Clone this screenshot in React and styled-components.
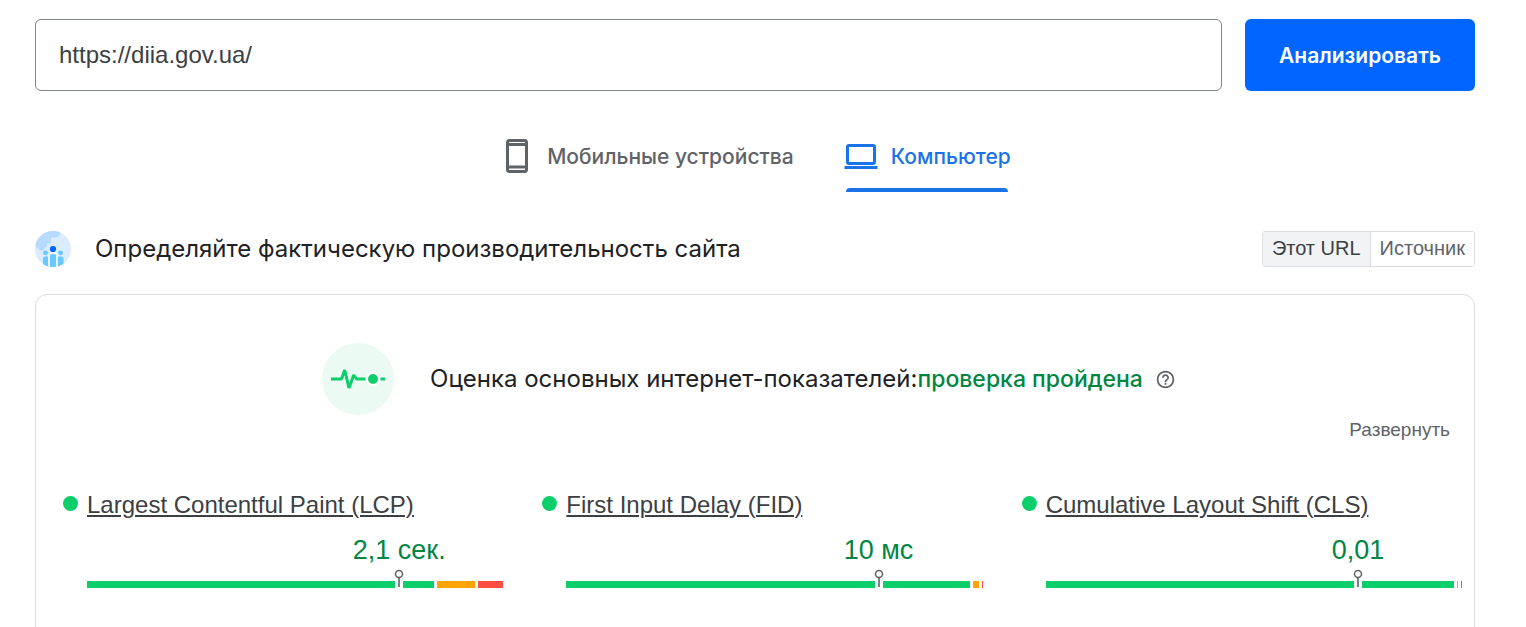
import { useState } from 'react';
import styled, { createGlobalStyle } from 'styled-components';

const GlobalStyle = createGlobalStyle`
  * {
    box-sizing: border-box;
  }
  body {
    margin: 0;
    background: #fff;
    color: #202124;
    font-family: 'Liberation Sans', Arial, sans-serif;
  }
  button {
    padding: 0;
    border: 0;
    background: none;
    font-family: inherit;
    cursor: pointer;
  }
`;

const headingFont = "Inter, 'Open Sans', sans-serif";

const Page = styled.main`
  padding: 19px 51px 0 35px;
  height: 100vh;
  overflow: hidden;
`;

const SearchForm = styled.form`
  display: flex;
  gap: 23px;
`;

const UrlInput = styled.input`
  flex: 1;
  min-width: 0;
  height: 72px;
  padding: 0 23px;
  border: 1px solid #80868b;
  border-radius: 6px;
  color: #3c4043;
  font-family: inherit;
  font-size: 24px;
`;

const AnalyzeButton = styled.button`
  height: 72px;
  width: 230px;
  border-radius: 6px;
  background: #0066ff;
  color: #fff;
  font-family: ${headingFont};
  font-size: 21px;
  font-weight: 600;
`;

const Tabs = styled.div`
  display: flex;
  justify-content: center;
  gap: 49px;
  margin-top: 29px;
`;

const Tab = styled.button`
  position: relative;
  display: flex;
  align-items: center;
  gap: 12px;
  height: 72px;
  color: ${(p) => (p.$active ? '#1a73e8' : '#5f6368')};
  font-family: ${headingFont};
  font-size: 21px;
  font-weight: 500;

  &::after {
    content: '';
    position: absolute;
    left: 3px;
    right: 3px;
    bottom: 0;
    height: 4px;
    border-radius: 4px 4px 0 0;
    background: ${(p) => (p.$active ? '#1a73e8' : 'transparent')};
  }
`;

const SectionHeader = styled.header`
  display: flex;
  align-items: center;
  gap: 24px;
  margin-top: 39px;
`;

const SectionTitle = styled.h1`
  flex: 1;
  margin: 0;
  font-family: ${headingFont};
  font-size: 24px;
  line-height: 36px;
  font-weight: 400;
`;

const Segmented = styled.div`
  display: flex;
  height: 36px;
  border: 1px solid #dadce0;
  border-radius: 3px;
`;

const Segment = styled.button`
  padding: 0 9px 2px;
  background: ${(p) => (p.$active ? '#f1f3f4' : '#fff')};
  color: ${(p) => (p.$active ? '#3c4043' : '#5f6368')};
  font-size: 20px;

  & + & {
    border-left: 1px solid #dadce0;
  }
`;

const Card = styled.section`
  margin-top: 27px;
  height: 400px;
  padding: 48px 12px 0 27px;
  border: 1px solid #dadce0;
  border-radius: 12px;
`;

const Assessment = styled.div`
  display: flex;
  align-items: center;
  justify-content: center;
  gap: 36px;
  padding-right: 15px;
`;

const AssessmentText = styled.h2`
  display: flex;
  align-items: center;
  margin: 0;
  font-family: ${headingFont};
  font-size: 24px;
  line-height: 36px;
  font-weight: 400;
`;

const Passed = styled.span`
  color: #018642;
  font-size: 23px;
  font-weight: 500;
`;

const HelpButton = styled.button`
  display: flex;
  margin: 0 12px;
`;

const ExpandRow = styled.div`
  display: flex;
  justify-content: flex-end;
  padding-right: 12px;
`;

const ExpandButton = styled.button`
  height: 30px;
  color: #5f6368;
  font-size: 19px;
`;

const Metrics = styled.div`
  display: grid;
  grid-template-columns: repeat(3, 1fr);
  gap: 39px;
  margin-top: 45px;
`;

const Metric = styled.article`
  display: grid;
  grid-template-columns: 15px 1fr;
  column-gap: 9px;
`;

const Dot = styled.span`
  width: 15px;
  height: 15px;
  margin-top: 6px;
  border-radius: 50%;
  background: #0cce6b;
`;

const MetricLink = styled.a`
  color: #3c4043;
  font-size: 24px;
  line-height: 30px;
  text-decoration-thickness: 2px;
  text-underline-offset: 2px;
`;

const MetricValue = styled.div`
  grid-column: 2;
  width: 50%;
  margin: 12px 0 0 auto;
  color: #018642;
  font-size: 27px;
  line-height: 36px;
  text-align: center;
`;

const Bar = styled.div`
  grid-column: 2;
  position: relative;
  display: flex;
  gap: 3px;
  height: 7px;
  margin-top: 13px;
`;

const BarPart = styled.span`
  flex: ${(p) => p.$share} 1 0;
  background: ${(p) => p.$color};
`;

const Pin = styled.span`
  position: absolute;
  left: 75%;
  bottom: 0;
  width: 8px;
  height: 7px;
  margin-left: -4px;
  background: #fff;

  svg {
    position: absolute;
    left: -1px;
    bottom: 0;
  }
`;

const barColors = ['#0cce6b', '#ffa400', '#ff4e42'];

const metrics = [
  { name: 'Largest Contentful Paint (LCP)', value: '2,1 сек.', shares: [347, 38, 25] },
  { name: 'First Input Delay (FID)', value: '10 мс', shares: [403, 6, 1] },
  { name: 'Cumulative Layout Shift (CLS)', value: '0,01', shares: [408, 1, 1] },
];

const PhoneIcon = () => (
  <svg width="36" height="36" viewBox="0 0 36 36" fill="none" stroke="currentColor" aria-hidden="true">
    <rect x="8.5" y="2.5" width="19" height="31" rx="2" strokeWidth="3" />
    <path d="M8 6.500h20M8 29h20" strokeWidth="3" />
  </svg>
);

const LaptopIcon = () => (
  <svg width="36" height="36" viewBox="0 0 36 36" fill="none" stroke="currentColor" aria-hidden="true">
    <rect x="4.5" y="7.5" width="27" height="18" rx="1.5" strokeWidth="3" />
    <path d="M1.5 29.5h33" strokeWidth="3" />
  </svg>
);

const FieldDataIcon = () => (
  <svg width="36" height="36" viewBox="0 0 36 36" aria-hidden="true">
    <clipPath id="fieldClip">
      <circle cx="18" cy="18" r="18" />
    </clipPath>
    <g clipPath="url(#fieldClip)">
      <rect width="36" height="36" fill="#dbecff" />
      <path d="M0 0H25.5Q25 6 21 6.5H16V10.5Q16 12 14 12.5H12V16Q9 16 8.500 19.500H5L0 15Z" fill="#b8daff" />
      <g fill="#68c8ff">
        <circle cx="10.5" cy="21.8" r="2.4" />
        <circle cx="25.5" cy="21.8" r="2.4" />
        <path d="M8 40V27Q8 25.500 10.500 25.500H13V40ZM28.500 40V27Q28.500 25.500 26 25.500H23V40Z" />
        <path d="M15 40V24.500Q15 23 18 23T21 24.500V40Z" />
      </g>
      <path d="M14 36V24Q14 21.700 18 21.700T22 24V36" fill="none" stroke="#f0f8ff" strokeWidth="1.3" />
      <circle cx="18" cy="18" r="3.1" fill="#0066ff" />
    </g>
  </svg>
);

const PulseIcon = () => (
  <svg width="72" height="72" viewBox="0 0 72 72" fill="none" aria-hidden="true">
    <circle cx="36" cy="36" r="36" fill="#ebfaf3" />
    <path
      d="M9 36h10.500l3.200-9 4.300 18 4.700-13 2.800 4H43.500M58.500 36H63"
      stroke="#0cce6b"
      strokeWidth="3"
      strokeLinejoin="bevel"
    />
    <circle cx="51" cy="36" r="6" fill="#0cce6b" stroke="#fff" strokeWidth="2" />
  </svg>
);

const HelpIcon = () => (
  <svg width="21" height="21" viewBox="0 0 24 24" fill="#5f6368" aria-hidden="true">
    <path d="M11 18h2v-2h-2v2zm1-16C6.480 2 2 6.480 2 12s4.480 10 10 10 10-4.480 10-10S17.520 2 12 2zm0 18c-4.410 0-8-3.590-8-8s3.590-8 8-8 8 3.590 8 8-3.590 8-8 8zm0-14c-2.210 0-4 1.790-4 4h2c0-1.100.900-2 2-2s2 .900 2 2c0 2-3 1.750-3 5h2c0-2.250 3-2.500 3-5 0-2.210-1.790-4-4-4z" />
  </svg>
);

const PinIcon = () => (
  <svg width="10" height="19" viewBox="0 0 10 19" fill="none" aria-hidden="true">
    <path d="M5 9v9" stroke="#6f8a7d" strokeWidth="2" />
    <circle cx="5" cy="5" r="3.5" fill="#fff" stroke="#5f6368" strokeWidth="1.5" />
  </svg>
);

const App = () => {
  const [url, setUrl] = useState('https://diia.gov.ua/');
  const [device, setDevice] = useState('desktop');
  const [scope, setScope] = useState('url');

  return (
    <>
      <GlobalStyle />
      <Page>
        <SearchForm onSubmit={(e) => e.preventDefault()}>
          <UrlInput aria-label="URL" value={url} onChange={(e) => setUrl(e.target.value)} />
          <AnalyzeButton type="submit">Анализировать</AnalyzeButton>
        </SearchForm>

        <Tabs role="tablist">
          <Tab
            role="tab"
            aria-selected={device === 'mobile'}
            $active={device === 'mobile'}
            onClick={() => setDevice('mobile')}
          >
            <PhoneIcon />
            Мобильные устройства
          </Tab>
          <Tab
            role="tab"
            aria-selected={device === 'desktop'}
            $active={device === 'desktop'}
            onClick={() => setDevice('desktop')}
          >
            <LaptopIcon />
            Компьютер
          </Tab>
        </Tabs>

        <SectionHeader>
          <FieldDataIcon />
          <SectionTitle>Определяйте фактическую производительность сайта</SectionTitle>
          <Segmented>
            <Segment $active={scope === 'url'} onClick={() => setScope('url')}>
              Этот URL
            </Segment>
            <Segment $active={scope === 'origin'} onClick={() => setScope('origin')}>
              Источник
            </Segment>
          </Segmented>
        </SectionHeader>

        <Card>
          <Assessment>
            <PulseIcon />
            <AssessmentText>
              Оценка основных интернет-показателей:
              <Passed>проверка пройдена</Passed>
              <HelpButton aria-label="Справка">
                <HelpIcon />
              </HelpButton>
            </AssessmentText>
          </Assessment>
          <ExpandRow>
            <ExpandButton>Развернуть</ExpandButton>
          </ExpandRow>
          <Metrics>
            {metrics.map((metric) => (
              <Metric key={metric.name}>
                <Dot />
                <div>
                  <MetricLink href="#">{metric.name}</MetricLink>
                </div>
                <MetricValue>{metric.value}</MetricValue>
                <Bar>
                  {metric.shares.map((share, i) => (
                    <BarPart key={barColors[i]} $share={share} $color={barColors[i]} />
                  ))}
                  <Pin>
                    <PinIcon />
                  </Pin>
                </Bar>
              </Metric>
            ))}
          </Metrics>
        </Card>
      </Page>
    </>
  );
};

export default App;
